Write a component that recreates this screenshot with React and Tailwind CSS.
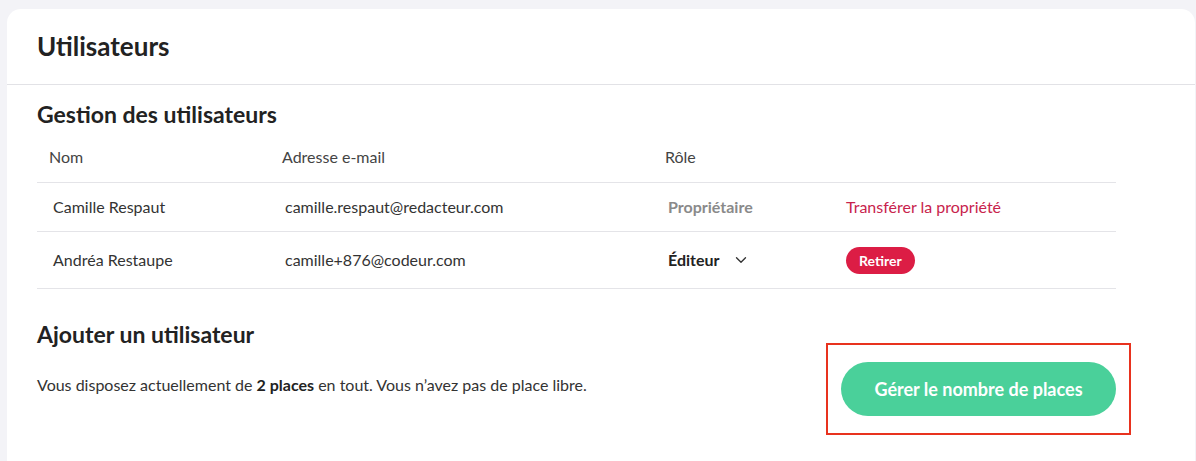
import { ChevronDown } from 'lucide-react';

const users = [
  {
    name: 'Camille Respaut',
    email: 'camille.respaut@redacteur.com',
    owner: true,
  },
  {
    name: 'Andréa Restaupe',
    email: 'camille+876@codeur.com',
    owner: false,
  },
];

const cols = 'grid grid-cols-[233px_383px_181px_1fr]';

const App = () => {
  return (
    <div
      className="min-h-[461px] bg-[#f3f3f7] pt-[9px] pl-[7px] pr-px"
      style={{ fontFamily: 'Lato, "Noto Sans", sans-serif' }}
    >
      <div className="bg-white rounded-t-[14px] min-h-[452px] text-[#2b2b2b]">
        {/* Header */}
        <div className="h-[76px] flex items-center px-[30px] border-b border-[#e2e2e6]">
          <h1 className="text-[26px] font-bold text-[#222]">Utilisateurs</h1>
        </div>

        <div className="px-[30px]">
          {/* Gestion */}
          <h2 className="text-[23px] font-bold text-[#222] mt-[15px] leading-[28px]">
            Gestion des utilisateurs
          </h2>

          <div className="w-[1079px] mt-[3px]">
            <div className={`${cols} h-[52px] items-center border-b border-[#e4e4e8] text-[16px] text-[#444]`}>
              <div className="pl-3">Nom</div>
              <div className="pl-3">Adresse e-mail</div>
              <div className="pl-3">Rôle</div>
              <div />
            </div>

            {users.map((u) => (
              <div
                key={u.email}
                className={`${cols} ${u.owner ? 'h-[49px]' : 'h-[57px]'} items-center border-b border-[#e4e4e8] text-[16px] text-[#333]`}
              >
                <div className="pl-4">{u.name}</div>
                <div className="pl-[15px]">{u.email}</div>
                <div className="pl-[15px]">
                  {u.owner ? (
                    <span className="font-bold text-[#8a8a8a]">Propriétaire</span>
                  ) : (
                    <span className="flex items-center gap-[13px] font-bold text-[#222]">
                      Éditeur
                      <ChevronDown size={18} strokeWidth={1.8} className="text-[#333]" />
                    </span>
                  )}
                </div>
                <div className="pl-3">
                  {u.owner ? (
                    <span className="text-[#c8234c]">Transférer la propriété</span>
                  ) : (
                    <button className="h-[27px] px-[13px] rounded-full bg-[#dc1d45] text-white text-[14px] font-bold">
                      Retirer
                    </button>
                  )}
                </div>
              </div>
            ))}
          </div>

          {/* Ajouter */}
          <div className="flex items-start justify-between w-[1094px] mt-[31px]">
            <div>
              <h2 className="text-[23px] font-bold text-[#222] leading-[28px]">Ajouter un utilisateur</h2>
              <p className="text-[16px] text-[#333] mt-[25px]">
                Vous disposez actuellement de <strong className="font-bold text-[#222]">2 places</strong> en tout. Vous n’avez pas de place libre.
              </p>
            </div>
            <div className="mt-[23px] border-2 border-[#e8321e] px-[13px] py-[17px]">
              <button className="h-[54px] w-[275px] rounded-full bg-[#4ad09a] text-white text-[18px] font-bold">
                Gérer le nombre de places
              </button>
            </div>
          </div>
        </div>
      </div>
    </div>
  );
};

export default App;
